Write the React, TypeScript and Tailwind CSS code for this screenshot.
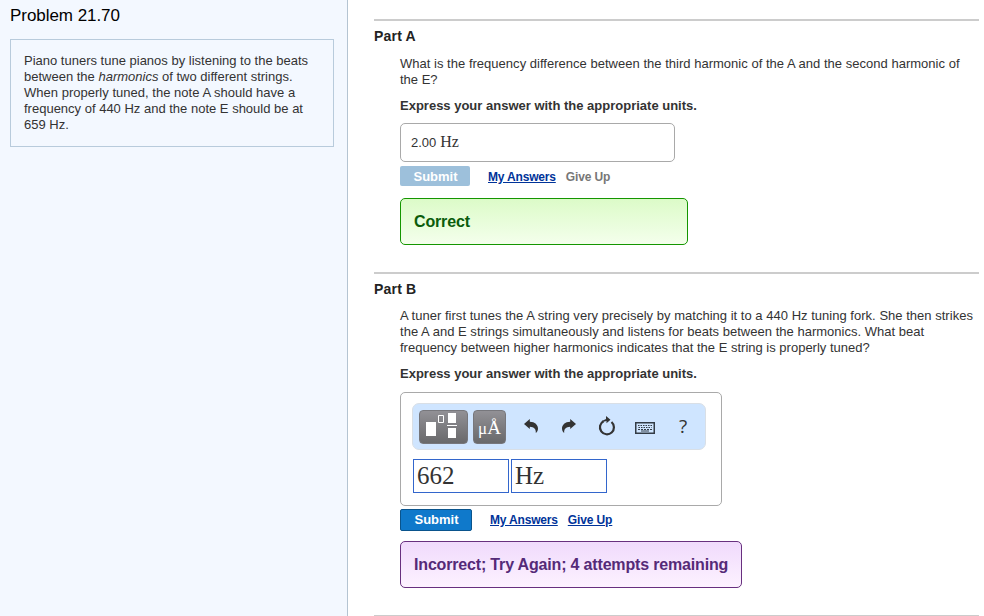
import React from "react"

function Rule() {
	return <div className="h-[2px] bg-[#cccccc]"></div>
}

function UndoIcon() {
	return (
		<svg width="14" height="14" viewBox="0 0 14 14" fill="#333333">
			<path d="M0 5 L5.8 0 V2.700 C11 2.800 14 6 14 9.500 C14 11.500 13 13 11.800 14 C12.200 10 10 7.800 5.800 7.700 V10 Z" />
		</svg>
	)
}

export default function App() {
	return (
		<div className="flex h-[616px] w-[984px] overflow-hidden bg-white font-['Liberation_Sans',Arial,sans-serif] text-[13px] leading-4 text-[#333333]">
			{/* Problem statement */}
			<div className="w-[348px] shrink-0 border-r border-[#b4c4d2] bg-[#f3f8ff] pl-[10px] pt-[6px]">
				<h1 className="h-[33px] text-[17px] leading-5 tracking-[-0.05px] text-black">
					Problem 21.70
				</h1>
				<div className="h-[108px] w-[324px] border border-[#b8cbdc] px-[13px] pt-[13px] whitespace-nowrap">
					<p>Piano tuners tune pianos by listening to the beats</p>
					<p>
						between the <em>harmonics</em> of two different strings.
					</p>
					<p className="tracking-[0.02px]">When properly tuned, the note A should have a</p>
					<p>frequency of 440 Hz and the note E should be at</p>
					<p>659 Hz.</p>
				</div>
			</div>

			<div className="ml-[26px] w-[605px] shrink-0 pt-[19px] whitespace-nowrap">
				{/* Part A */}
				<section className="h-[253px]">
					<Rule />
					<h2 className="mt-[7px] text-[14px] font-bold tracking-[0.2px] text-[#222222]">
						Part A
					</h2>
					<div className="ml-[26px] mt-[12px]">
						<p className="tracking-[0.02px]">
							What is the frequency difference between the third harmonic of the A and the second harmonic of
						</p>
						<p>the E?</p>
						<p className="mt-[10px] font-bold">
							Express your answer with the appropriate units.
						</p>
						<div className="mt-[9px] flex h-[39px] w-[275px] items-center rounded-[5px] border border-[#a9a9a9] pl-[10px]">
							<span>2.00</span>
							<span className="mb-[2px] ml-[4px] font-['Liberation_Serif',serif] text-[16px]">
								Hz
							</span>
						</div>
						<div className="mt-[4px] flex h-5 items-center text-[12px] font-bold">
							<button className="h-5 w-[70px] rounded-[2px] bg-[#9dc0db] pl-px text-[13px] leading-[22px] text-white">
								Submit
							</button>
							<a className="ml-[18px] pt-[2px] tracking-[-0.18px] text-[#003399] underline">My Answers</a>
							<span className="ml-[10px] pt-[2px] tracking-[-0.12px] text-[#777777]">Give Up</span>
						</div>
						<div className="mt-[12px] flex h-[47px] w-[288px] items-center rounded-[5px] border border-[#149600] bg-linear-to-b from-[#dcfbc8] to-[#f4ffec] pl-[13px] text-[16px] font-bold tracking-[-0.15px] text-[#0b5c0b]">
							Correct
						</div>
					</div>
				</section>

				{/* Part B */}
				<section className="h-[343px]">
					<Rule />
					<h2 className="mt-[7px] text-[14px] font-bold tracking-[0.2px] text-[#222222]">
						Part B
					</h2>
					<div className="ml-[26px] mt-[11px]">
						<p className="tracking-[0.02px]">
							A tuner first tunes the A string very precisely by matching it to a 440 Hz tuning fork. She then strikes
						</p>
						<p className="tracking-[0.02px]">
							the A and E strings simultaneously and listens for beats between the harmonics. What beat
						</p>
						<p>
							frequency between higher harmonics indicates that the E string is properly tuned?
						</p>
						<p className="mt-[10px] font-bold">
							Express your answer with the appropriate units.
						</p>
						<div className="mt-[10px] h-[114px] w-[322px] rounded-[5px] border border-[#a9a9a9] pl-[11px] pt-[10px]">
							{/* Equation toolbar */}
							<div className="flex h-[47px] w-[294px] items-center rounded-[7px] border border-[#d9dfe6] bg-[#cfe5ff] pl-[6px]">
								<button className="h-[34px] w-[49px] rounded-[4px] border border-[#77777c] bg-linear-to-b from-[#929196] to-[#69696b]">
									<svg width="47" height="32" viewBox="0 0 47 32">
										<path d="M6 11h10v14H6z M28 2h8v10h-8z M28 17h8v10h-8z M27 14h10v1H27z" fill="white" />
										<path d="M18.500 4.500h5v7h-5z" fill="none" stroke="white" />
									</svg>
								</button>
								<button className="ml-[5px] h-[34px] w-[33px] rounded-[4px] border border-[#77777c] bg-linear-to-b from-[#929196] to-[#69696b] font-['Liberation_Serif',serif] text-[19px] leading-[34px] text-white">
									<span className="text-[17px]">μ</span>Å
								</button>
								<div className="mb-px ml-[18px] w-[14px]">
									<UndoIcon />
								</div>
								<div className="mb-px ml-[24px] w-[14px] -scale-x-100">
									<UndoIcon />
								</div>
								<svg className="mb-px ml-[22px]" width="18" height="20" viewBox="0 0 18 20">
									<path d="M5.500 5.200 A7 7 0 1 0 13.500 6" fill="none" stroke="#333333" strokeWidth="2.200" />
									<path d="M8 0 L12.500 3.800 L8.500 7.200 V5 L4.500 6 L4 5 L8 3 Z" fill="#333333" />
								</svg>
								<svg className="ml-[19px] mt-[3px]" width="20" height="12" viewBox="0 0 20 12">
									<path d="M.75 .75h18.500v10.500H.75z" fill="none" stroke="#333c46" strokeWidth="1.500" />
									<path d="M3 3.500h14M3.500 5.500h13" stroke="#333c46" strokeDasharray="1.500 1" />
									<path d="M3 7.500h14" stroke="#333c46" strokeDasharray="2 1" />
									<path d="M6 9h8" stroke="#333c46" />
								</svg>
								<span className="mb-[2px] ml-[24px] font-['Open_Sans',sans-serif] text-[19px] leading-5">
									?
								</span>
							</div>
							<div className="ml-px mt-[9px] flex gap-[2px] font-['Liberation_Serif',serif] text-[25px] leading-8">
								<div className="h-[34px] w-[96px] border border-[#3366cc] pl-[3px]">662</div>
								<div className="h-[34px] w-[96px] border border-[#3366cc] pl-[3px]">Hz</div>
							</div>
						</div>
						<div className="mt-[3px] flex h-[22px] items-center text-[12px] font-bold">
							<button className="h-[22px] w-[72px] rounded-[2px] border border-[#0a548c] bg-[#0f79cb] pl-px text-[13px] leading-5 text-white">
								Submit
							</button>
							<a className="ml-[18px] tracking-[-0.18px] text-[#003399] underline">My Answers</a>
							<a className="ml-[10px] tracking-[-0.12px] text-[#003399] underline">Give Up</a>
						</div>
						<div className="mt-[10px] flex h-[47px] w-[342px] items-center rounded-[5px] border border-[#68307f] bg-linear-to-b from-[#f0dafc] to-[#fdf2ff] pl-[13px] text-[16px] font-bold tracking-[-0.17px] text-[#552a78]">
							Incorrect; Try Again; 4 attempts remaining
						</div>
					</div>
					<div className="mt-[27px]">
						<Rule />
					</div>
				</section>
			</div>
		</div>
	)
}
